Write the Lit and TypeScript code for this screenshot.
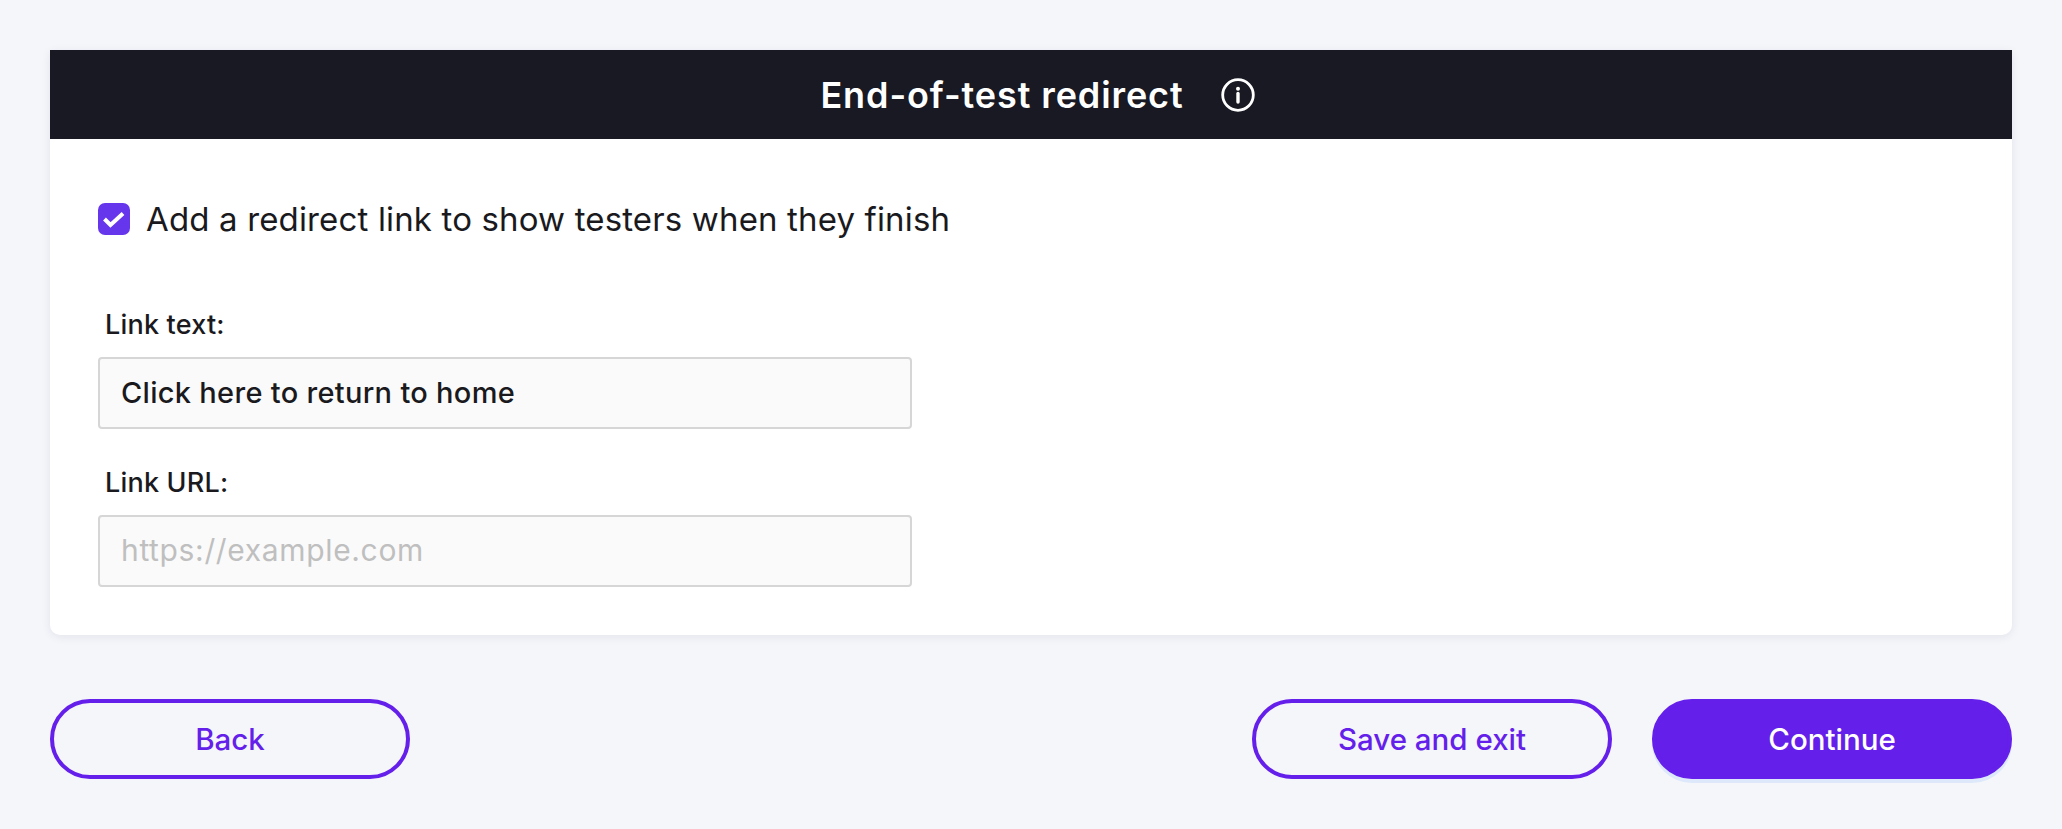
import { LitElement, html, css } from "lit";
import { customElement } from "lit/decorators.js";

@customElement("app-root")
export class AppRoot extends LitElement {
  static styles = css`
    :host {
      display: block;
      min-height: 829px;
      box-sizing: border-box;
      padding: 50px;
      background: #f5f6fa;
      font-family: Inter, "Noto Sans", sans-serif;
      color: #1a1a1e;
    }
    .card {
      background: #fff;
      border-radius: 0 0 10px 10px;
      box-shadow: 0 2px 10px rgba(30, 30, 60, 0.08);
    }
    .head {
      height: 89px;
      background: #181922;
      color: #fff;
      display: flex;
      align-items: center;
      justify-content: center;
      gap: 37px;
      padding-left: 13px;
    }
    .title {
      font-size: 36px;
      font-weight: 600;
      letter-spacing: 0.9px;
    }
    .info { width: 34px; height: 34px; display: block; }
    .body { padding: 64px 48px 48px; }
    .check {
      display: flex;
      align-items: center;
      gap: 16px;
      height: 32px;
      margin-bottom: 75px;
    }
    .box {
      width: 32px;
      height: 32px;
      border-radius: 7px;
      background: #6536ec;
      display: block;
      flex: none;
    }
    .check-label { font-size: 33px; letter-spacing: 0.15px; }
    .label {
      display: block;
      font-size: 27px;
      font-weight: 500;
      line-height: 30px;
      margin: 0 0 17px 7px;
      letter-spacing: 0.2px;
    }
    .input {
      display: block;
      box-sizing: border-box;
      width: 814px;
      height: 72px;
      padding: 0 21px 2px;
      margin-bottom: 39px;
      background: #fafafa;
      border: 2.5px solid #d6d6d6;
      border-radius: 4px;
      outline: none;
      font-family: inherit;
      font-size: 29px;
      font-weight: 500;
      letter-spacing: 0.3px;
      color: #1a1a1e;
    }
    .input:last-child { margin-bottom: 0; }
    .input::placeholder {
      color: #bfbfbf;
      font-size: 30px;
      font-weight: 400;
      letter-spacing: 0.65px;
      opacity: 1;
    }
    .foot {
      display: flex;
      justify-content: space-between;
      margin-top: 64px;
    }
    .right { display: flex; gap: 40px; }
    .btn {
      box-sizing: border-box;
      width: 360px;
      height: 80px;
      border-radius: 40px;
      border: 4px solid #651fea;
      background: transparent;
      color: #651fea;
      font-family: inherit;
      font-size: 29.5px;
      font-weight: 550;
      padding: 0;
    }
    .primary {
      background: #651fea;
      color: #fff;
      font-weight: 500;
      box-shadow: 0 4px 0 #dde9fb;
    }
  `;

  render() {
    return html`
      <div class="card">
        <div class="head">
          <span class="title">End-of-test redirect</span>
          <svg class="info" viewBox="0 0 34 34" fill="none" stroke="#fff">
            <circle cx="17" cy="17" r="15.3" stroke-width="2.8"></circle>
            <circle cx="17" cy="10.8" r="2" fill="#fff" stroke="none"></circle>
            <path d="M17 15.5V24" stroke-width="3.4" stroke-linecap="round"></path>
          </svg>
        </div>
        <div class="body">
          <div class="check">
            <svg class="box" viewBox="0 0 32 32" fill="none">
              <path d="M6.5 16l6 6L25 10.5" stroke="#fff" stroke-width="4"></path>
            </svg>
            <span class="check-label">Add a redirect link to show testers when they finish</span>
          </div>
          <label class="label">Link text:</label>
          <input class="input" .value=${"Click here to return to home"} />
          <label class="label">Link URL:</label>
          <input class="input" placeholder="https://example.com" />
        </div>
      </div>
      <div class="foot">
        <button class="btn">Back</button>
        <div class="right">
          <button class="btn">Save and exit</button>
          <button class="btn primary">Continue</button>
        </div>
      </div>
    `;
  }
}
